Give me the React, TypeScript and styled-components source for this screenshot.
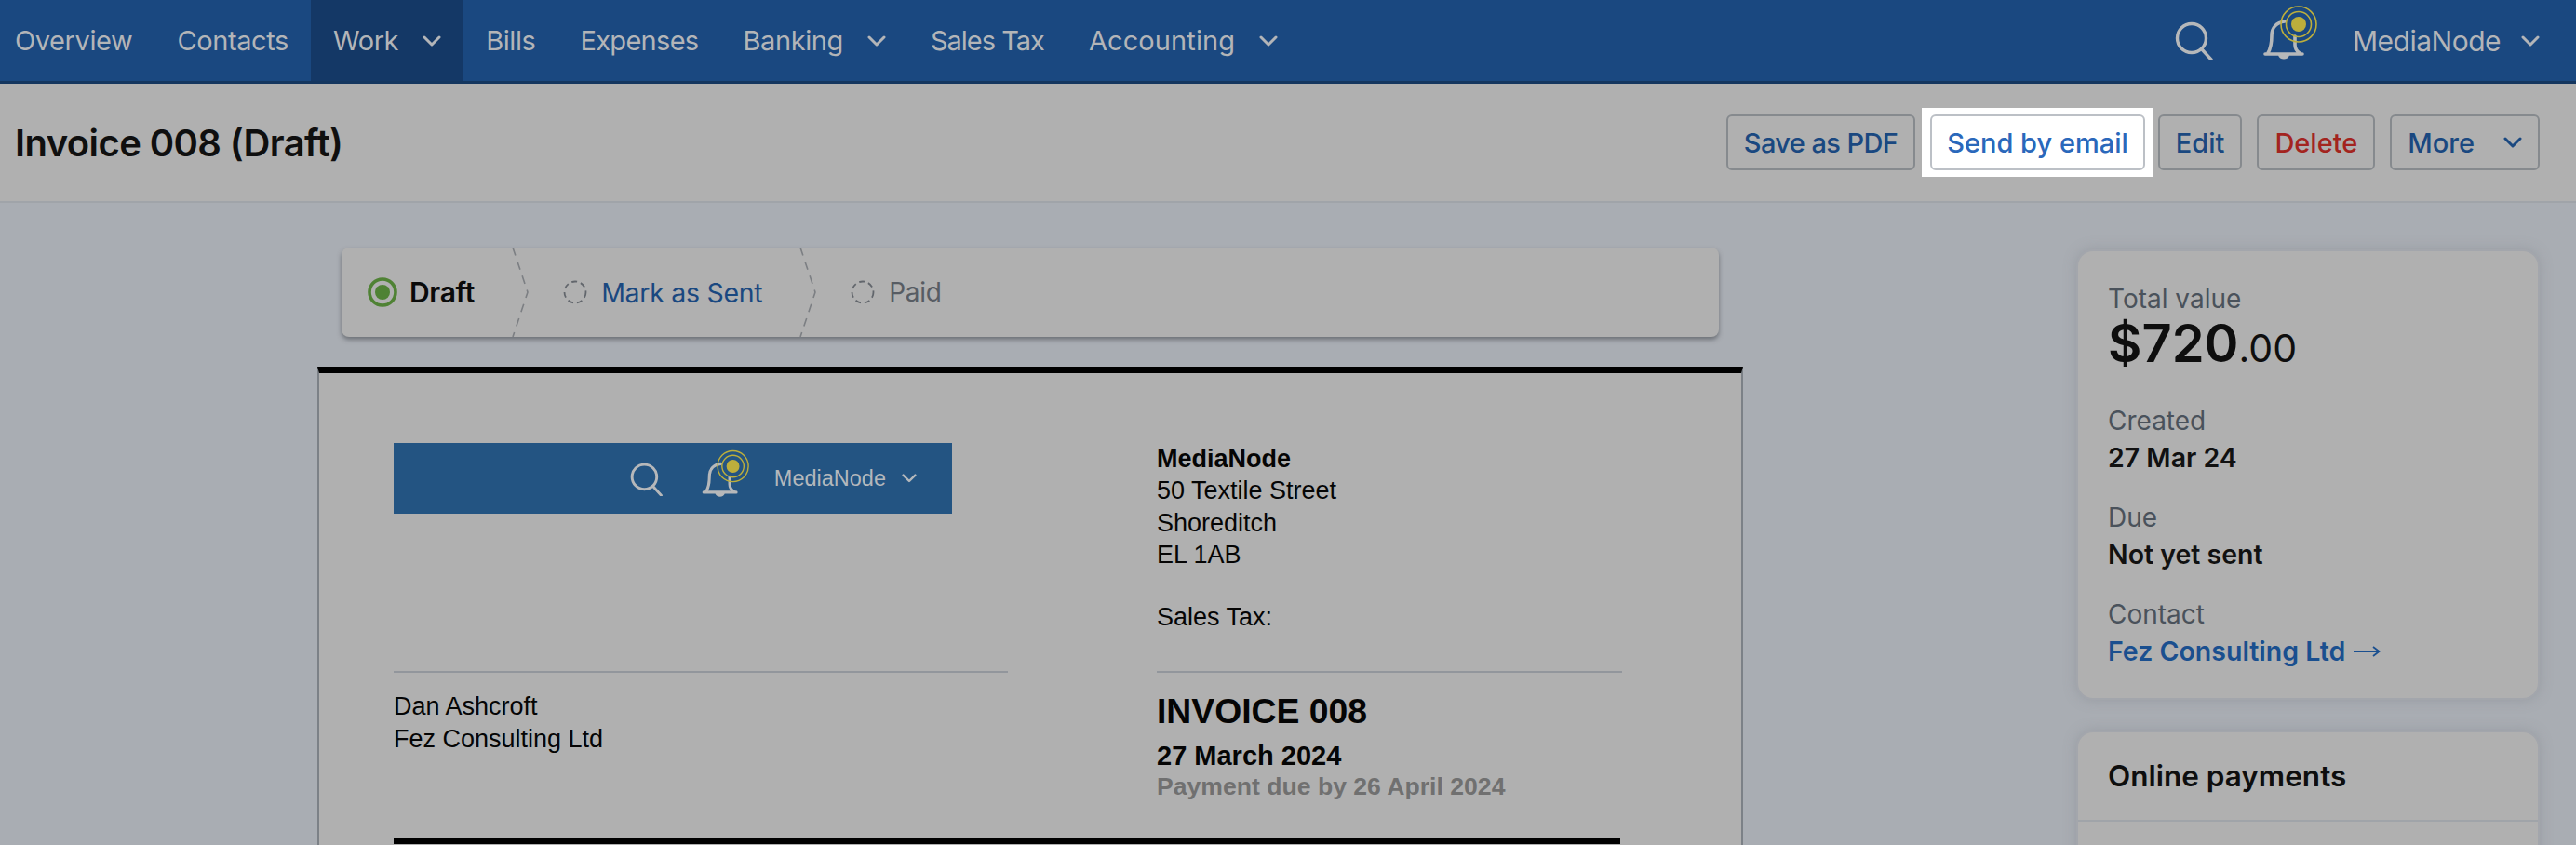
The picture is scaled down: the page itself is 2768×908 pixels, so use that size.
import styled, { createGlobalStyle } from "styled-components";

const GlobalStyle = createGlobalStyle`
  html, body {
    margin: 0;
    padding: 0;
    background: #a9adb3;
  }
  * {
    box-sizing: border-box;
  }
`;

const Page = styled.div`
  width: 2768px;
  height: 908px;
  overflow: hidden;
  background: #a9adb3;
  font-family: Inter, "Liberation Sans", sans-serif;
`;

const NavBar = styled.nav`
  display: flex;
  align-items: stretch;
  height: 90px;
  background: #1a4880;
  border-bottom: 3px solid #14365f;
  padding-right: 39px;
`;

const NavItem = styled.div<{ $active?: boolean; $track?: number }>`
  display: flex;
  align-items: center;
  gap: 26px;
  padding: 0 24px;
  height: 87px;
  font-size: 29px;
  letter-spacing: ${(p) => p.$track ?? -0.4}px;
  color: #b3b5b8;
  background: ${(p) => (p.$active ? "#143866" : "transparent")};
  &:first-child {
    padding-left: 16px;
  }
`;

const NavRight = styled.div`
  margin-left: auto;
  display: flex;
  align-items: center;
  height: 87px;
`;

const SearchIcon = styled.svg`
  width: 42px;
  height: 42px;
  margin-right: 49px;
`;

const BellIcon = styled.svg`
  width: 62px;
  height: 64px;
  margin-right: 38px;
  margin-top: -19px;
`;

const AccountName = styled.span`
  font-size: 30px;
  letter-spacing: -0.5px;
  color: #b3b5b8;
  margin-right: 22px;
`;

const PageHeader = styled.header`
  display: flex;
  align-items: center;
  justify-content: space-between;
  height: 128px;
  padding: 0 39px 0 16px;
  background: #b0b0b0;
  border-bottom: 2px solid #a0a4a9;
`;

const PageTitle = styled.h1`
  margin: 0;
  font-size: 40px;
  font-weight: 600;
  letter-spacing: -0.6px;
  color: #0f0f0f;
`;

const Actions = styled.div`
  display: flex;
  align-items: center;
  gap: 16px;
`;

const ActionButton = styled.div<{ $tone?: "blue" | "red" | "focus" }>`
  display: flex;
  align-items: center;
  gap: 31px;
  height: 60px;
  padding: 0 ${(p) => (p.$tone === "focus" ? "16px" : "17px")};
  border-radius: 6px;
  font-size: 29px;
  font-weight: 500;
  border: 2px solid ${(p) => (p.$tone === "focus" ? "#bcc0c6" : "#868a8e")};
  background: ${(p) => (p.$tone === "focus" ? "#ffffff" : "transparent")};
  color: ${(p) =>
    p.$tone === "red" ? "#a3241f" : p.$tone === "focus" ? "#2a68bb" : "#1a4880"};
`;

const PdfButton = styled(ActionButton)`
  letter-spacing: -0.6px;
`;

const Spotlight = styled.div`
  background: #ffffff;
  padding: 7px 9px;
  margin: 0 -11px 0 -9px;
`;

const Main = styled.main`
  display: flex;
  align-items: flex-start;
  padding: 48px 39px 0 341px;
  gap: 358px;
`;

const InvoiceColumn = styled.div`
  width: 1532px;
  flex-shrink: 0;
`;

const StatusBar = styled.div`
  display: flex;
  align-items: center;
  height: 96px;
  margin: 0 26px 32px;
  padding-left: 28px;
  background: #b0b0b0;
  border-radius: 8px;
  box-shadow: 0 3px 5px rgba(60, 64, 70, 0.55);
`;

const Step = styled.div<{ $muted?: boolean; $link?: boolean; $strong?: boolean }>`
  display: flex;
  align-items: center;
  gap: ${(p) => (p.$strong ? "13px" : "15px")};
  font-size: ${(p) => (p.$strong ? "30px" : p.$muted ? "28px" : "28.5px")};
  letter-spacing: -0.3px;
  font-weight: ${(p) => (p.$strong ? 600 : 400)};
  color: ${(p) => (p.$strong ? "#0a0a0a" : p.$link ? "#1a4880" : "#575c63")};
`;

const StepDivider = styled.svg`
  width: 20px;
  height: 96px;
  margin: 0 35px 0 40px;
  flex-shrink: 0;
`;

const Paper = styled.div`
  min-height: 600px;
  padding: 75px 130px 0 80px;
  background: #b0b0b0;
  border: 2px solid #7c8187;
  border-top: 7px solid #000000;
  font-family: "Liberation Sans", Arial, sans-serif;
  color: #050505;
`;

const PaperGrid = styled.div`
  display: grid;
  grid-template-columns: 660px 500px;
  column-gap: 160px;
`;

const BrandCell = styled.div`
  height: 245px;
`;

const LogoBar = styled.div`
  display: flex;
  align-items: center;
  justify-content: flex-end;
  width: 600px;
  height: 76px;
  padding-right: 38px;
  background: #235482;
`;

const LogoSearch = styled.svg`
  width: 36px;
  height: 36px;
  margin-right: 38px;
  margin-top: 2px;
`;

const LogoBell = styled.svg`
  width: 54px;
  height: 56px;
  margin-right: 27px;
  margin-top: -13px;
`;

const LogoName = styled.span`
  font-size: 23.5px;
  color: #b4b8bc;
  margin-right: 17px;
`;

const AddressBlock = styled.div`
  font-size: 27px;
  line-height: 34.3px;
`;

const CompanyName = styled.div`
  font-weight: 700;
`;

const TaxLine = styled.div`
  margin-top: 33px;
`;

const BillTo = styled.div`
  border-top: 2px solid #92969c;
  padding: 19px 0 89px;
  font-size: 27px;
  line-height: 35px;
`;

const InvoiceMeta = styled.div`
  border-top: 2px solid #92969c;
  padding-top: 19px;
`;

const InvoiceNumber = styled.div`
  font-size: 37.3px;
  line-height: 44px;
  font-weight: 700;
`;

const InvoiceDate = styled.div`
  margin-top: 8px;
  font-size: 29px;
  line-height: 36px;
  font-weight: 700;
`;

const PaymentDue = styled.div`
  font-size: 26.6px;
  line-height: 30px;
  font-weight: 700;
  color: #707070;
`;

const PaperRule = styled.div`
  height: 6px;
  background: #000000;
`;

const Sidebar = styled.aside`
  display: flex;
  flex-direction: column;
  gap: 33px;
  width: 498px;
  flex-shrink: 0;
  margin-top: 2px;
`;

const Card = styled.section`
  background: #b0b0b0;
  border: 2px solid #a3a6ac;
  border-radius: 18px;
  box-shadow: 0 0 14px rgba(120, 124, 132, 0.35);
`;

const SummaryBody = styled.div`
  padding: 31px 32px 30px;
`;

const Field = styled.div<{ $lead?: boolean }>`
  margin-bottom: ${(p) => (p.$lead ? "30px" : "24px")};
  &:last-child {
    margin-bottom: 0;
  }
`;

const FieldLabel = styled.div`
  font-size: 28px;
  line-height: 40px;
  color: #4a525b;
`;

const FieldValue = styled.div`
  font-size: 28.5px;
  line-height: 40px;
  font-weight: 600;
  color: #111111;
`;

const FieldLink = styled(FieldValue)`
  display: flex;
  align-items: center;
  gap: 8px;
  color: #1a4f8f;
`;

const Amount = styled.div`
  font-size: 56px;
  line-height: 56px;
  font-weight: 600;
  color: #0e0e0e;
  small {
    font-size: 41px;
    font-weight: 400;
  }
`;

const CardHeading = styled.h2`
  margin: 0;
  height: 96px;
  padding: 27px 32px 0;
  font-size: 31.5px;
  line-height: 40px;
  font-weight: 600;
  color: #0e0e0e;
  border-bottom: 2px solid #a0a4a9;
`;

const CardFill = styled.div`
  height: 120px;
`;

function Chevron({ color, size = 20 }: { color: string; size?: number }) {
  return (
    <svg width={size} height={size * 0.6} viewBox="0 0 20 12" fill="none">
      <path d="M2 2 L10 10 L18 2" stroke={color} strokeWidth="3" strokeLinecap="round" strokeLinejoin="round" />
    </svg>
  );
}

function Beacon() {
  return (
    <>
      <path
        d="M6 56 L46 56 M9 55 C12 50 13 44 13 36 C13 28 18 22 27 21 M38 37 L38 46 C38 50 40 53 43 55"
        fill="none"
        stroke="#b6b8ba"
        strokeWidth="3.6"
        strokeLinecap="round"
        strokeLinejoin="round"
      />
      <path d="M20 57 C21 63 31 63 32 57 Z" fill="#b6b8ba" />
      <circle cx="42" cy="24" r="8" fill="#bcae3c" />
      <circle cx="42" cy="24" r="13.5" fill="none" stroke="#bcae3c" strokeWidth="1.6" />
      <circle cx="42" cy="24" r="19" fill="none" stroke="#bcae3c" strokeWidth="1.6" />
    </>
  );
}

function Magnifier() {
  return (
    <>
      <circle cx="18" cy="18" r="15.5" fill="none" stroke="#b6b8ba" strokeWidth="3.4" />
      <path d="M29 30 L39 41" stroke="#b6b8ba" strokeWidth="3.4" strokeLinecap="round" />
    </>
  );
}

function Divider() {
  return (
    <StepDivider viewBox="0 0 20 96">
      <path d="M1 0 L17 48 L1 96" fill="none" stroke="#7c7f83" strokeWidth="1.6" strokeDasharray="9 7" />
    </StepDivider>
  );
}

function Pending() {
  return (
    <svg width="26" height="26" viewBox="0 0 26 26">
      <circle cx="13" cy="13" r="11.5" fill="none" stroke="#62666c" strokeWidth="1.8" strokeDasharray="6 4" />
    </svg>
  );
}

function LongArrow() {
  return (
    <svg width="30" height="14" viewBox="0 0 30 14" fill="none">
      <path d="M1 7 L28 7 M22 2 L28.5 7 L22 12" stroke="#1a4f8f" strokeWidth="1.8" />
    </svg>
  );
}

function App() {
  return (
    <Page>
      <GlobalStyle />
      <NavBar>
        <NavItem>Overview</NavItem>
        <NavItem>Contacts</NavItem>
        <NavItem $active>
          Work <Chevron color="#b3b5b8" />
        </NavItem>
        <NavItem>Bills</NavItem>
        <NavItem $track={-0.7}>Expenses</NavItem>
        <NavItem>
          Banking <Chevron color="#b3b5b8" />
        </NavItem>
        <NavItem $track={-1}>Sales Tax</NavItem>
        <NavItem $track={0.1}>
          Accounting <Chevron color="#b3b5b8" />
        </NavItem>
        <NavRight>
          <SearchIcon viewBox="0 0 42 42">
            <Magnifier />
          </SearchIcon>
          <BellIcon viewBox="0 0 62 64">
            <Beacon />
          </BellIcon>
          <AccountName>MediaNode</AccountName>
          <Chevron color="#b3b5b8" />
        </NavRight>
      </NavBar>

      <PageHeader>
        <PageTitle>Invoice 008 (Draft)</PageTitle>
        <Actions>
          <PdfButton>Save as PDF</PdfButton>
          <Spotlight>
            <ActionButton $tone="focus">Send by email</ActionButton>
          </Spotlight>
          <ActionButton>Edit</ActionButton>
          <ActionButton $tone="red">Delete</ActionButton>
          <ActionButton>
            More <Chevron color="#1a4880" />
          </ActionButton>
        </Actions>
      </PageHeader>

      <Main>
        <InvoiceColumn>
          <StatusBar>
            <Step $strong>
              <svg width="32" height="32" viewBox="0 0 32 32">
                <circle cx="16" cy="16" r="14" fill="none" stroke="#4f8234" strokeWidth="3.6" />
                <circle cx="16" cy="16" r="8" fill="#4f8234" />
              </svg>
              Draft
            </Step>
            <Divider />
            <Step $link>
              <Pending />
              Mark as Sent
            </Step>
            <Divider />
            <Step $muted>
              <Pending />
              Paid
            </Step>
          </StatusBar>

          <Paper>
            <PaperGrid>
              <BrandCell>
                <LogoBar>
                  <LogoSearch viewBox="0 0 42 42">
                    <Magnifier />
                  </LogoSearch>
                  <LogoBell viewBox="0 0 62 64">
                    <Beacon />
                  </LogoBell>
                  <LogoName>MediaNode</LogoName>
                  <Chevron color="#b4b8bc" size={16} />
                </LogoBar>
              </BrandCell>
              <AddressBlock>
                <CompanyName>MediaNode</CompanyName>
                <div>50 Textile Street</div>
                <div>Shoreditch</div>
                <div>EL 1AB</div>
                <TaxLine>Sales Tax:</TaxLine>
              </AddressBlock>
              <BillTo>
                <div>Dan Ashcroft</div>
                <div>Fez Consulting Ltd</div>
              </BillTo>
              <InvoiceMeta>
                <InvoiceNumber>INVOICE 008</InvoiceNumber>
                <InvoiceDate>27 March 2024</InvoiceDate>
                <PaymentDue>Payment due by 26 April 2024</PaymentDue>
              </InvoiceMeta>
            </PaperGrid>
            <PaperRule />
          </Paper>
        </InvoiceColumn>

        <Sidebar>
          <Card>
            <SummaryBody>
              <Field $lead>
                <FieldLabel>Total value</FieldLabel>
                <Amount>
                  $720<small>.00</small>
                </Amount>
              </Field>
              <Field>
                <FieldLabel>Created</FieldLabel>
                <FieldValue>27 Mar 24</FieldValue>
              </Field>
              <Field>
                <FieldLabel>Due</FieldLabel>
                <FieldValue>Not yet sent</FieldValue>
              </Field>
              <Field>
                <FieldLabel>Contact</FieldLabel>
                <FieldLink>
                  Fez Consulting Ltd <LongArrow />
                </FieldLink>
              </Field>
            </SummaryBody>
          </Card>
          <Card>
            <CardHeading>Online payments</CardHeading>
            <CardFill />
          </Card>
        </Sidebar>
      </Main>
    </Page>
  );
}

export default App;
